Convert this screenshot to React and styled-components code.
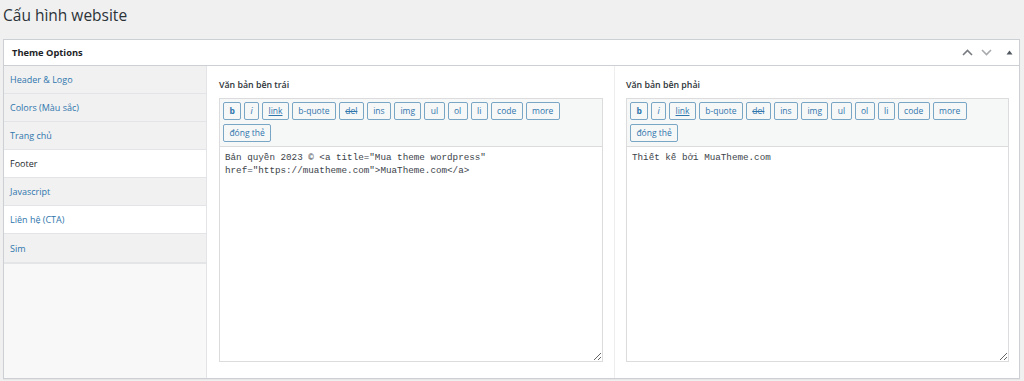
import React from "react";
import styled, { createGlobalStyle } from "styled-components";

const Global = createGlobalStyle`
  html, body { margin: 0; padding: 0; background: #f0f0f1; }
  body { font-family: "Open Sans", "Noto Sans", sans-serif; color: #23282d; }
  * { box-sizing: border-box; }
`;

const Page = styled.div`
  padding: 5px 4px 3px 3px;
`;

const Title = styled.h1`
  margin: 0 0 14px;
  font-size: 15.5px;
  line-height: 20px;
  font-weight: 400;
  color: #2c3338;
`;

const Panel = styled.section`
  background: #fff;
  border: 1px solid #ccd0d4;
  box-shadow: 0 1px 1px rgba(0, 0, 0, 0.04);
`;

const PanelHeader = styled.header`
  height: 26px;
  border-bottom: 1px solid #ccd0d4;
  display: flex;
  align-items: center;
  padding: 0 4px 0 8px;
`;

const PanelTitle = styled.h2`
  flex: 1;
  margin: 0;
  font-size: 9.3px;
  font-weight: 700;
  color: #1d2327;
`;

const HeaderActions = styled.div`
  display: flex;
  align-items: center;
  gap: 8px;
`;

const IconBtn = styled.span`
  width: 11px;
  height: 11px;
  display: inline-flex;
  align-items: center;
  justify-content: center;
  margin-left: ${(p) => p.$gap || 0}px;
`;

const Body = styled.div`
  display: flex;
  min-height: 312px;
`;

const Sidebar = styled.nav`
  width: 203px;
  flex: none;
  background: #f8f8f8;
  border-right: 1px solid #e2e4e7;
`;

const NavList = styled.ul`
  list-style: none;
  margin: 0;
  padding: 0;
  border-bottom: 2px solid #e4e5e7;
`;

const NavItem = styled.li`
  height: 28px;
  display: flex;
  align-items: center;
  padding-left: 6px;
  font-size: 9px;
  border-bottom: 1px solid #e2e4e7;
  background: ${(p) => (p.$active || p.$hover ? "#fff" : "#f1f1f1")};
  color: ${(p) => (p.$active ? "#23282d" : "#2f76ad")};
  &:last-child { border-bottom: none; }
`;

const Columns = styled.div`
  flex: 1;
  display: grid;
  grid-template-columns: 407px 1fr;
`;

const Column = styled.div`
  padding: 13px ${(p) => (p.$last ? 10 : 11)}px 15px ${(p) => (p.$last ? 11 : 12)}px;
  border-left: ${(p) => (p.$last ? "1px solid #eeeeee" : "none")};
  display: flex;
  flex-direction: column;
`;

const Label = styled.label`
  font-size: 8.8px;
  font-weight: 600;
  line-height: 12px;
  color: #2c3338;
  margin-bottom: 7px;
`;

const Editor = styled.div`
  border: 1px solid #dcdcde;
  display: flex;
  flex-direction: column;
`;

const Toolbar = styled.div`
  background: #f6f7f7;
  border-bottom: 1px solid #dcdcde;
  padding: 3px 3px 4px;
  display: flex;
  flex-wrap: wrap;
  gap: 4px 3px;
`;

const QButton = styled.button`
  height: 18px;
  padding: 0 5.4px;
  border: 1px solid #7aa6c6;
  border-radius: 2px;
  background: #f6f7f7;
  color: #2f76ad;
  font-family: "Open Sans", "Noto Sans", sans-serif;
  font-size: 8.5px;
  line-height: 16px;
  font-weight: ${(p) => (p.$bold ? 700 : 400)};
  font-style: ${(p) => (p.$italic ? "italic" : "normal")};
  text-decoration: ${(p) => p.$deco || "none"};
  cursor: pointer;
`;

const Area = styled.textarea`
  display: block;
  width: 100%;
  height: 214px;
  border: none;
  outline: none;
  resize: vertical;
  padding: 4px 5px;
  margin: 0;
  font-family: "Liberation Mono", "DejaVu Sans Mono", monospace;
  font-size: 9.25px;
  line-height: 13px;
  color: #3c434a;
  background: #fff;
`;

const buttons = [
  { t: "b", bold: true },
  { t: "i", italic: true },
  { t: "link", deco: "underline" },
  { t: "b-quote" },
  { t: "del", deco: "line-through" },
  { t: "ins" },
  { t: "img" },
  { t: "ul" },
  { t: "ol" },
  { t: "li" },
  { t: "code" },
  { t: "more" },
  { t: "đóng thẻ" },
];

const nav = [
  { t: "Header & Logo" },
  { t: "Colors (Màu sắc)" },
  { t: "Trang chủ" },
  { t: "Footer", active: true },
  { t: "Javascript" },
  { t: "Liên hệ (CTA)", hover: true },
  { t: "Sim" },
];

function QuickEditor({ label, value }) {
  return (
    <>
      <Label>{label}</Label>
      <Editor>
        <Toolbar>
          {buttons.map((b) => (
            <QButton key={b.t} $bold={b.bold} $italic={b.italic} $deco={b.deco}>
              {b.t}
            </QButton>
          ))}
        </Toolbar>
        <Area defaultValue={value} spellCheck={false} />
      </Editor>
    </>
  );
}

export default function App() {
  return (
    <>
      <Global />
      <Page>
        <Title>Cấu hình website</Title>
        <Panel>
          <PanelHeader>
            <PanelTitle>Theme Options</PanelTitle>
            <HeaderActions>
              <IconBtn>
                <svg width="11" height="7" viewBox="0 0 11 7">
                  <path d="M1 6 L5.5 1.5 L10 6" fill="none" stroke="#787c82" strokeWidth="1.6" />
                </svg>
              </IconBtn>
              <IconBtn>
                <svg width="11" height="7" viewBox="0 0 11 7">
                  <path d="M1 1 L5.5 5.5 L10 1" fill="none" stroke="#a7aaad" strokeWidth="1.6" />
                </svg>
              </IconBtn>
              <IconBtn $gap={4}>
                <svg width="7" height="5" viewBox="0 0 7 5">
                  <path d="M0.5 4.5 L3.5 0.5 L6.5 4.5 Z" fill="#50575e" />
                </svg>
              </IconBtn>
            </HeaderActions>
          </PanelHeader>
          <Body>
            <Sidebar>
              <NavList>
                {nav.map((n) => (
                  <NavItem key={n.t} $active={n.active} $hover={n.hover}>
                    {n.t}
                  </NavItem>
                ))}
              </NavList>
            </Sidebar>
            <Columns>
              <Column>
                <QuickEditor
                  label="Văn bản bên trái"
                  value={'Bản quyền 2023 © <a title="Mua theme wordpress" href="https://muatheme.com">MuaTheme.com</a>'}
                />
              </Column>
              <Column $last>
                <QuickEditor label="Văn bản bên phải" value="Thiết kế bởi MuaTheme.com" />
              </Column>
            </Columns>
          </Body>
        </Panel>
      </Page>
    </>
  );
}
